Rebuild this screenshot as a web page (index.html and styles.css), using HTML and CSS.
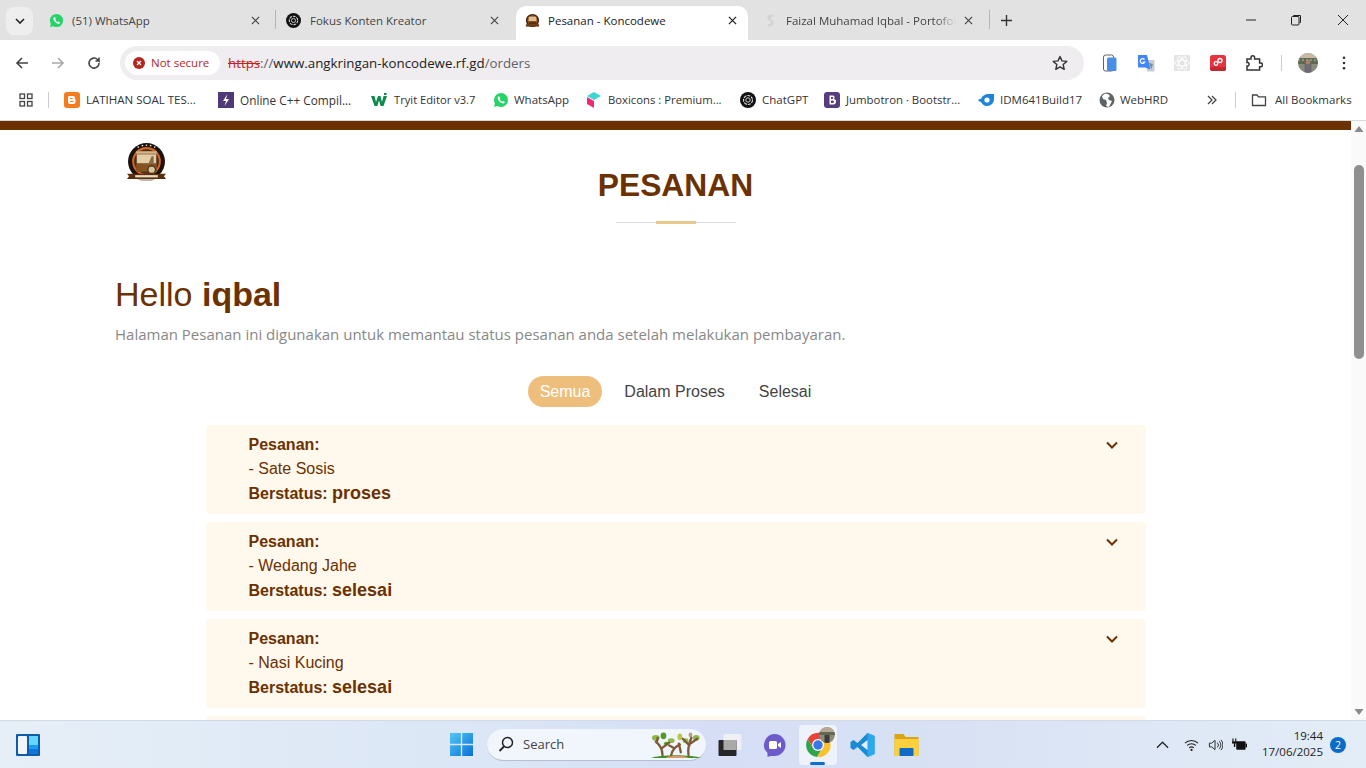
FILE: index.html
```html
<!DOCTYPE html>
<html lang="id">
<head>
<meta charset="utf-8">
<title>Pesanan - Koncodewe</title>
<link rel="stylesheet" href="styles.css">
</head>
<body>
<div class="tabstrip">
  <button class="tab-search"><svg width="10" height="6" viewBox="0 0 10 6"><path d="M1 1l4 4 4-4" fill="none" stroke="#222" stroke-width="1.600"/></svg></button>
  <div class="tab tab-1">
    <svg class="fav" viewBox="0 0 16 16"><circle cx="8" cy="8" r="7" fill="#25d366"/><path d="M1 15l1.200-4.200 3 3z" fill="#25d366"/><path d="M5.300 4.400c-.9.800-.9 2.200.2 3.800 1.100 1.700 2.700 3 4.400 3.200 1 .1 1.800-.5 2-1.400l-1.900-1-.8.800c-1-.4-2-1.400-2.500-2.500l.7-.8-.9-2z" fill="#fff"/></svg>
    <span class="tab-title">(51) WhatsApp</span>
    <svg class="tab-x" viewBox="0 0 10 10"><path d="M1 1l8 8M9 1l-8 8" stroke="#444" stroke-width="1.300"/></svg>
  </div>
  <i class="tab-sep"></i>
  <div class="tab tab-2">
    <svg class="fav" viewBox="0 0 16 16"><circle cx="8" cy="8" r="8" fill="#111"/><circle cx="8" cy="8" r="4.500" fill="none" stroke="#ddd" stroke-width="1.100" stroke-dasharray="3 1"/><circle cx="8" cy="8" r="2.200" fill="none" stroke="#ccc"/></svg>
    <span class="tab-title">Fokus Konten Kreator</span>
    <svg class="tab-x" viewBox="0 0 10 10"><path d="M1 1l8 8M9 1l-8 8" stroke="#444" stroke-width="1.300"/></svg>
  </div>
  <div class="tab tab-active">
    <svg class="fav" viewBox="0 0 16 16"><circle cx="8" cy="8" r="7" fill="#3a2010"/><circle cx="8" cy="8" r="5.500" fill="#a8551f"/><rect x="4" y="4" width="8" height="5" fill="#d9bd94"/><rect x="4" y="9" width="8" height="3" fill="#5a3110"/><rect x="1" y="12" width="14" height="2.500" fill="#6d3a12"/></svg>
    <span class="tab-title">Pesanan - Koncodewe</span>
    <svg class="tab-x" viewBox="0 0 10 10"><path d="M1 1l8 8M9 1l-8 8" stroke="#222" stroke-width="1.400"/></svg>
  </div>
  <div class="tab tab-4">
    <svg class="fav" viewBox="0 0 16 16"><path d="M11 3.500C9 2 5 3 5.500 5.500S11 8 10.500 10.500 7 14 5 12.500M9 2L7 6M9.500 10L7 14" fill="none" stroke="#d2d2d2" stroke-width="1.800"/></svg>
    <span class="tab-title tab-fade">Faizal Muhamad Iqbal - Portofolio</span>
    <svg class="tab-x" viewBox="0 0 10 10"><path d="M1 1l8 8M9 1l-8 8" stroke="#444" stroke-width="1.300"/></svg>
  </div>
  <i class="tab-sep"></i>
  <svg class="new-tab" viewBox="0 0 12 12"><path d="M6 0v12M0 6h12" stroke="#333" stroke-width="1.500"/></svg>
  <div class="win-controls">
    <svg viewBox="0 0 12 12"><path d="M1 6h10" stroke="#222"/></svg>
    <svg viewBox="0 0 12 12"><path d="M3.500 2.500V1.500h7v7h-1" fill="none" stroke="#222"/><rect x="1.500" y="2.500" width="7.500" height="8.500" rx="1" fill="none" stroke="#222"/></svg>
    <svg viewBox="0 0 12 12"><path d="M1 1l10 10M11 1L1 11" stroke="#222"/></svg>
  </div>
</div>

<div class="toolbar">
  <svg class="nav-btn" viewBox="0 0 16 16"><path d="M14 8H3M8 3L3 8l5 5" fill="none" stroke="#444" stroke-width="1.600"/></svg>
  <svg class="nav-btn" viewBox="0 0 16 16"><path d="M2 8h11M8 3l5 5-5 5" fill="none" stroke="#a8a8a8" stroke-width="1.600"/></svg>
  <svg class="nav-btn" viewBox="0 0 16 16"><path d="M13 8a5 5 0 1 1-1.500-3.500L13 6V2.500M13 6H9.500" fill="none" stroke="#444" stroke-width="1.600"/></svg>
  <div class="omnibox">
    <div class="chip">
      <svg class="chip-ic" viewBox="0 0 12 12"><circle cx="6" cy="6" r="6" fill="#b3261e"/><path d="M4 4l4 4M8 4l-4 4" stroke="#fff" stroke-width="1.200"/></svg>
      <span>Not secure</span>
    </div>
    <div class="url"><s class="proto">https</s><span class="url-dim">://</span><span class="url-host">www.angkringan-koncodewe.rf.gd</span><span class="url-dim">/orders</span></div>
    <svg class="star" viewBox="0 0 16 16"><path d="M8 1.500l2 4.400 4.800.5-3.600 3.200 1 4.700L8 11.900l-4.200 2.400 1-4.700L1.200 6.400 6 5.900z" fill="none" stroke="#333" stroke-width="1.400" stroke-linejoin="round"/></svg>
  </div>
  <div class="ext-row">
    <svg viewBox="0 0 18 18"><rect x="2.500" y="1" width="10" height="16" rx="2" fill="#fff" stroke="#5f6368"/><rect x="6" y="3.500" width="9.500" height="13.500" rx="1.500" fill="#4a8fe7"/></svg>
    <svg viewBox="0 0 18 18"><path d="M9 6h8.500v11.500H10z" fill="#c9ccd1"/><path d="M12 9l4 1-1.500 5z" fill="#6d8fa0"/><path d="M1 1h9l3.500 14.500L8 13.500H1z" fill="#4285f4"/><path d="M7.500 5.500a2.400 2.400 0 1 0 .3 2.600H5.800" fill="none" stroke="#fff" stroke-width="1.200"/></svg>
    <svg viewBox="0 0 18 18"><rect x="1" y="1" width="16" height="16" rx="1" fill="#e4e4e4"/><g fill="none" stroke="#fff" stroke-width="1"><ellipse cx="9" cy="9" rx="7" ry="3"/><ellipse cx="9" cy="9" rx="7" ry="3" transform="rotate(60 9 9)"/><ellipse cx="9" cy="9" rx="7" ry="3" transform="rotate(120 9 9)"/></g></svg>
    <svg viewBox="0 0 18 18"><rect x="1" y="1" width="16" height="16" rx="2.500" fill="#e8323e"/><path d="M1 13h16v1.500a2.500 2.500 0 0 1-2.500 2.500h-11A2.500 2.500 0 0 1 1 14.500z" fill="#c22834"/><circle cx="11" cy="6.500" r="2" fill="none" stroke="#fff" stroke-width="1.300"/><circle cx="7" cy="9.500" r="1.800" fill="none" stroke="#fff" stroke-width="1.300"/></svg>
    <svg viewBox="0 0 18 18"><path d="M2 5h4V3.500a1.800 1.800 0 0 1 3.600 0V5h5v4h1a1.900 1.900 0 0 1 0 3.800h-1V16H2v-4h1a1.900 1.900 0 0 0 0-3.500H2z" fill="none" stroke="#333" stroke-width="1.500"/></svg>
  </div>
  <i class="bar-sep"></i>
  <svg class="avatar" viewBox="0 0 20 20"><defs><clipPath id="ac"><circle cx="10" cy="10" r="10"/></clipPath></defs><g clip-path="url(#ac)"><rect width="20" height="20" fill="#8a8b7c"/><rect width="20" height="6" fill="#c9b8a6"/><rect y="5" width="20" height="6" fill="#5f6a50"/><path d="M0 7h20" stroke="#b8c2a8" stroke-dasharray="2 2"/><rect x="6.500" y="11" width="7" height="9" fill="#6f6a72"/><circle cx="10" cy="9" r="2.400" fill="#a9806a"/></g></svg>
  <svg class="menu-dots" viewBox="0 0 4 16"><circle cx="2" cy="2" r="1.500" fill="#333"/><circle cx="2" cy="8" r="1.500" fill="#333"/><circle cx="2" cy="14" r="1.500" fill="#333"/></svg>
</div>

<div class="bookmarks">
  <svg class="apps" viewBox="0 0 14 14"><g fill="none" stroke="#444" stroke-width="1.300"><rect x="1" y="1" width="4.500" height="4.500"/><rect x="8.500" y="1" width="4.500" height="4.500"/><rect x="1" y="8.500" width="4.500" height="4.500"/><rect x="8.500" y="8.500" width="4.500" height="4.500"/></g></svg>
  <i class="bm-sep"></i>
  <div class="bm"><svg viewBox="0 0 16 16"><rect width="16" height="16" rx="3" fill="#f57c1f"/><path d="M5 4h4a2 2 0 0 1 2 2v1l.5.500V10a2 2 0 0 1-2 2H6a2 2 0 0 1-2-2V5a1 1 0 0 1 1-1z" fill="#fff"/><path d="M6 6.500h2.500M6 9.500h3.500" stroke="#f57c1f" stroke-width="1.100"/></svg><span>LATIHAN SOAL TES...</span></div>
  <div class="bm"><svg viewBox="0 0 16 16"><rect width="16" height="16" fill="#4f3a78"/><path d="M9.500 2L5 9h3l-1.500 5L11 7H8z" fill="#fff"/></svg><span>Online C++ Compil...</span></div>
  <div class="bm"><svg viewBox="0 0 16 16"><path d="M0 4h3.500l1.500 6 2-6h2.500l1.500 6 1.500-6H16l-3.500 10H9.700L8 8.500 6.300 14H3.500z" fill="#0b8a4d"/><path d="M13 1h2.500v2H13z" fill="#0b8a4d"/></svg><span>Tryit Editor v3.7</span></div>
  <div class="bm"><svg viewBox="0 0 16 16"><circle cx="8" cy="8" r="7" fill="#25d366"/><path d="M1 15l1.200-4.200 3 3z" fill="#25d366"/><path d="M5.300 4.400c-.9.800-.9 2.200.2 3.800 1.100 1.700 2.700 3 4.400 3.200 1 .1 1.800-.5 2-1.400l-1.900-1-.8.800c-1-.4-2-1.400-2.500-2.500l.7-.8-.9-2z" fill="#fff"/></svg><span>WhatsApp</span></div>
  <div class="bm"><svg viewBox="0 0 16 16"><path d="M8 0l7 4-7 4-7-4z" fill="#3fd6d2"/><path d="M1 5l7 4v7l-7-4z" fill="#f0287a"/></svg><span>Boxicons : Premium...</span></div>
  <div class="bm"><svg viewBox="0 0 16 16"><circle cx="8" cy="8" r="8" fill="#111"/><circle cx="8" cy="8" r="4.500" fill="none" stroke="#ddd" stroke-width="1.100" stroke-dasharray="3 1"/><circle cx="8" cy="8" r="2.200" fill="none" stroke="#ccc"/></svg><span>ChatGPT</span></div>
  <div class="bm"><svg viewBox="0 0 16 16"><rect width="16" height="16" rx="3" fill="#563d7c"/><path d="M5.500 3.500h3a2 2 0 0 1 1.300 3.600A2.400 2.400 0 0 1 8.800 12.500H5.500zM7 5v2h1.300a1 1 0 0 0 0-2zM7 8.400V11h1.600a1.300 1.300 0 0 0 0-2.600z" fill="#fff" fill-rule="evenodd"/></svg><span>Jumbotron · Bootstr...</span></div>
  <div class="bm"><svg viewBox="0 0 16 16"><path d="M0 8c1-1 2-1 3-1 1-3 4-5 8-5h5v5c0 4-3 7-7 7-3 0-5-2-6-4-1 0-2-1-3-2z" fill="#1d84dc"/><circle cx="9" cy="8" r="2.600" fill="#fff"/></svg><span>IDM641Build17</span></div>
  <div class="bm"><svg viewBox="0 0 16 16"><circle cx="8" cy="8" r="7.500" fill="#5f6368"/><path d="M6 1.500L3 4l1 3 3 1 1 3-1 3 3 1 2-4 1-2-3-1-1-2 2-2-2-2z" fill="#fff"/></svg><span>WebHRD</span></div>
  <svg class="bm-more" viewBox="0 0 10 10"><path d="M1 1l4 4-4 4M5 1l4 4-4 4" fill="none" stroke="#444" stroke-width="1.300"/></svg>
  <i class="bm-sep"></i>
  <div class="bm bm-all"><svg viewBox="0 0 16 16"><path d="M1.500 3h4.500l1.500 1.800h7V13.500h-13z" fill="none" stroke="#444" stroke-width="1.300"/></svg><span>All Bookmarks</span></div>
</div>

<div class="viewport">
  <main class="page">
    <div class="topbar"></div>
    <div class="container">
      <svg class="logo" viewBox="0 0 38 38"><circle cx="19" cy="18" r="18" fill="#1c120c"/><g fill="#eee"><circle cx="11" cy="4" r=".8"/><circle cx="15" cy="2.600" r=".8"/><circle cx="19" cy="2.200" r=".8"/><circle cx="23" cy="2.600" r=".8"/><circle cx="27" cy="4" r=".8"/></g><circle cx="19" cy="18" r="14" fill="#d0661f"/><circle cx="19" cy="18" r="12" fill="#4a2d16"/><rect x="9" y="8" width="20" height="2.500" fill="#d3b589"/><rect x="9.500" y="11" width="19" height="9" fill="#e3cda6"/><path d="M24 13h2v7h-5z" fill="#8a6a44"/><rect x="9" y="20" width="20" height="8" fill="#855322"/><circle cx="24" cy="26" r="3.600" fill="#d9c39b" stroke="#33200f"/><path d="M0 30h38l-2 2.500 2 2.500H0l2-2.500z" fill="#5b2e0c"/><rect x="8" y="31.300" width="22" height="2.200" fill="#e7dac4"/><path d="M10 35h18l-4 2h-10z" fill="#bdb6ac"/></svg>
      <div class="section-title">
        <h2>PESANAN</h2>
        <div class="title-rule"><i></i></div>
      </div>
      <h1 class="hello">Hello <b>iqbal</b></h1>
      <p class="lead">Halaman Pesanan ini digunakan untuk memantau status pesanan anda setelah melakukan pembayaran.</p>
      <div class="filters">
        <span class="pill pill-on">Semua</span>
        <span class="pill">Dalam Proses</span>
        <span class="pill">Selesai</span>
      </div>
      <div class="orders">
        <article class="order">
          <div class="order-text"><b>Pesanan:</b><span>- Sate Sosis</span><b>Berstatus: <em>proses</em></b></div>
          <svg class="chev" viewBox="0 0 12 8"><path d="M1 1.500l5 5 5-5" fill="none" stroke="#6b3100" stroke-width="2"/></svg>
        </article>
        <article class="order">
          <div class="order-text"><b>Pesanan:</b><span>- Wedang Jahe</span><b>Berstatus: <em>selesai</em></b></div>
          <svg class="chev" viewBox="0 0 12 8"><path d="M1 1.500l5 5 5-5" fill="none" stroke="#6b3100" stroke-width="2"/></svg>
        </article>
        <article class="order">
          <div class="order-text"><b>Pesanan:</b><span>- Nasi Kucing</span><b>Berstatus: <em>selesai</em></b></div>
          <svg class="chev" viewBox="0 0 12 8"><path d="M1 1.500l5 5 5-5" fill="none" stroke="#6b3100" stroke-width="2"/></svg>
        </article>
        <article class="order"></article>
      </div>
    </div>
  </main>
  <div class="scrollbar">
    <svg class="sb-arrow" viewBox="0 0 10 8"><path d="M5 1l4.500 6H.5z" fill="#8a8a8a"/></svg>
    <div class="sb-track"><div class="sb-thumb"></div></div>
    <svg class="sb-arrow" viewBox="0 0 10 8"><path d="M5 7L.5 1h9z" fill="#8a8a8a"/></svg>
  </div>
</div>

<footer class="taskbar">
  <div class="tb-left">
    <svg class="widget" viewBox="0 0 24 22"><rect width="24" height="22" rx="1" fill="#0f5da8"/><rect x="2" y="2" width="9" height="18" rx="1" fill="#f2f5f8"/><rect x="13" y="2" width="9" height="9" fill="#63d7fd"/><rect x="13" y="11" width="9" height="4" fill="#1b9bf0"/><rect x="13" y="15" width="9" height="5" fill="#0a78dc"/></svg>
  </div>
  <div class="tb-center">
    <svg class="start" viewBox="0 0 24 24"><defs><linearGradient id="sg" x1="0" y1="0" x2="1" y2="1"><stop offset="0" stop-color="#52c8f5"/><stop offset="1" stop-color="#0a6fd6"/></linearGradient></defs><path d="M0 0h11.300v11.300H0zM12.700 0H24v11.300H12.700zM0 12.700h11.300V24H0zM12.700 12.700H24V24H12.700z" fill="url(#sg)"/></svg>
    <div class="search">
      <svg class="search-ic" viewBox="0 0 16 16"><circle cx="9.500" cy="6.500" r="5" fill="none" stroke="#222" stroke-width="1.500"/><path d="M6 10.500L1.500 15" stroke="#222" stroke-width="1.800"/></svg>
      <span>Search</span>
      <svg class="search-art" viewBox="0 0 54 28"><path d="M1 27c8-4 44-4 52 0z" fill="#3f8f2a"/><path d="M16 27c4-3 20-3 24 0z" fill="#d9996e"/><g fill="#8fb84a"><ellipse cx="6" cy="6" rx="4" ry="3"/><ellipse cx="14" cy="4" rx="3" ry="3.500" fill="#4f9a2c"/><ellipse cx="22" cy="9" rx="3.500" ry="2.500"/><ellipse cx="31" cy="5" rx="2.500" ry="3.500" fill="#b5c94a"/><ellipse cx="37" cy="9" rx="3" ry="2.500"/><ellipse cx="48" cy="6" rx="3.500" ry="3"/><ellipse cx="17" cy="12" rx="2.500" ry="2" fill="#4f9a2c"/><ellipse cx="42" cy="3" rx="2" ry="2.500" fill="#b8a078"/></g><g fill="none" stroke="#7d5a33" stroke-width="2.400" stroke-linecap="round"><path d="M13 24c0-5-2-10-7-14M12 17l8-6M7 11l1-5"/><path d="M40 24c-1-6 0-11 3-18M41 14l-7-7M42 12l7-5"/><path d="M22 24c1-6 6-10 9-11M24 16l-4-2M30 12l2 9"/></g></svg>
    </div>
    <div class="apps-row">
      <div class="app"><svg viewBox="0 0 24 24"><rect x="5" y="1" width="18" height="16" rx="1" fill="#eef0f3"/><rect x="0" y="7" width="18" height="16" rx="1" fill="#262626"/><rect x="5" y="7" width="13" height="10" fill="#a9a9a9"/></svg></div>
      <div class="app"><svg viewBox="0 0 24 24"><path d="M12 1a11 11 0 0 1 0 22H8l-3 1v-4A11 11 0 0 1 12 1z" fill="#6c5bc9"/><rect x="6.500" y="8" width="8" height="8" rx="1.500" fill="#fff"/><path d="M15.500 11l3-2v6l-3-2z" fill="#fff"/></svg></div>
      <div class="app app-on"><svg viewBox="0 0 24 24"><path d="M12 12L22 6.500A11 11 0 0 0 2.500 6.500L7 14z" fill="#e6443a"/><path d="M7 14L2.500 6.500A11 11 0 0 0 11 23l5-8z" fill="#2fa44f"/><path d="M16 15l-5 8A11 11 0 0 0 22 6.500H12z" fill="#fbc02d"/><circle cx="12" cy="12" r="5.500" fill="#fff"/><circle cx="12" cy="12" r="4.400" fill="#3b78e7"/></svg><svg class="app-badge" viewBox="0 0 16 16"><circle cx="8" cy="8" r="8" fill="#8a8b7c"/><rect width="16" height="5" fill="#b8a896"/><rect y="5" width="16" height="3" fill="#5f6a50"/><rect x="5.500" y="8" width="5" height="8" fill="#3d3a38"/></svg><i class="app-ind"></i></div>
      <div class="app"><svg viewBox="0 0 24 24"><path d="M17 0L7 10 3 7 0 9v6l3 2 4-3 10 10 7-3V3z" fill="#1a8ad4"/><path d="M17 0l7 3v18l-7 3z" fill="#2ba8ee"/><path d="M17 7v10l-6.500-5z" fill="#e6eff8"/></svg></div>
      <div class="app"><svg viewBox="0 0 24 24"><path d="M0 1h9l2 3h13v19H0z" fill="#d9a514"/><path d="M0 6h24v17H0z" fill="#fbd03f"/><rect x="5" y="15" width="14" height="8" rx="1" fill="#0f6cc4"/></svg></div>
    </div>
  </div>
  <div class="tb-right">
    <svg class="tray tray-up" viewBox="0 0 14 8"><path d="M1 7l6-6 6 6" fill="none" stroke="#222" stroke-width="1.300"/></svg>
    <svg class="tray" viewBox="0 0 16 14"><path d="M1 5a10 10 0 0 1 14 0M3.300 7.500a7 7 0 0 1 9.400 0M5.500 10a4 4 0 0 1 5 0" fill="none" stroke="#222" stroke-width="1.100"/><circle cx="8" cy="12.300" r="1.200" fill="#222"/></svg>
    <svg class="tray" viewBox="0 0 16 14"><path d="M1.500 5h2.500L7.500 2v10L4 9H1.500z" fill="none" stroke="#222"/><path d="M10 4.500a3.500 3.500 0 0 1 0 5M12 3a6 6 0 0 1 0 8M13.800 1.500a8 8 0 0 1 0 11" fill="none" stroke="#222"/></svg>
    <svg class="tray" viewBox="0 0 16 14"><path d="M1 0v3M4 0v3" stroke="#111" stroke-width="1.200"/><path d="M0 3h5.500v2.500H3.500V9H2V5.500H0z" fill="#111"/><rect x="4.500" y="3" width="10" height="9" rx="1" fill="#111"/><rect x="14.500" y="5.500" width="1.500" height="4" fill="#111"/></svg>
    <div class="clock"><span>19:44</span><span>17/06/2025</span></div>
    <div class="notif">2</div>
  </div>
</footer>
</body>
</html>
```

FILE: styles.css
```css
* { box-sizing: border-box; }
html, body { margin: 0; padding: 0; }
body {
  width: 1366px;
  height: 768px;
  overflow: hidden;
  display: flex;
  flex-direction: column;
  background: #fff;
  font-family: "Open Sans", "Noto Sans", sans-serif;
}
svg { display: block; flex: none; }

/* tab strip */
.tabstrip {
  height: 40px;
  flex: none;
  display: flex;
  align-items: flex-end;
  background: #e2e2e2;
  padding-left: 5px;
}
.tab-search {
  width: 27px;
  height: 28px;
  margin: 0 8px 5px 1px;
  padding: 0;
  border: 0;
  border-radius: 8px;
  background: #eeeeee;
  display: flex;
  align-items: center;
  justify-content: center;
}
.tab {
  height: 34px;
  display: flex;
  align-items: center;
  padding-bottom: 6px;
  font-size: 11.500px;
  color: #444;
}
.tab-1 { width: 235px; margin-left: -1px; padding-left: 9px; padding-right: 15px; }
.tab-2 { width: 232px; margin-right: 8px; padding-left: 10px; padding-right: 9px; }
.tab-2 .fav { margin-right: 9px; }
.tab-active {
  width: 232px;
  background: #fff;
  border-radius: 10px 10px 0 0;
  color: #222;
  padding-left: 9px;
  padding-right: 11px;
  margin-right: 6px;
}
.tab-4 { width: 229px; padding-left: 9px; padding-right: 10px; margin-right: 6px; }
.fav { width: 15px; height: 15px; margin-right: 8px; }
.tab-title { flex: 1; white-space: nowrap; overflow: hidden; min-width: 0; }
.tab-fade { -webkit-mask-image: linear-gradient(90deg, #000 88%, transparent); mask-image: linear-gradient(90deg, #000 88%, transparent); }
.tab-x { width: 9px; height: 9px; margin-left: 8px; }
.tab-sep { width: 1px; height: 19px; background: #b5b5b5; margin-bottom: 11px; flex: none; }
.new-tab { width: 11px; height: 11px; margin: 0 0 14px 11px; }
.win-controls {
  display: flex;
  margin-left: auto;
  margin-bottom: 14px;
  gap: 33px;
  padding-right: 17px;
}
.win-controls svg { width: 12px; height: 12px; }
.win-controls svg:nth-child(2) { margin-right: 2px; }

/* toolbar */
.toolbar {
  height: 45px;
  flex: none;
  display: flex;
  align-items: center;
  background: #fff;
  padding-left: 14px;
}
.nav-btn { width: 16px; height: 16px; margin-right: 20px; }
.omnibox {
  width: 964px;
  height: 34px;
  margin-left: -2px;
  border-radius: 17px;
  background: #efedef;
  display: flex;
  align-items: center;
  padding-left: 5px;
  padding-right: 16px;
}
.chip {
  width: 95px;
  height: 24px;
  border-radius: 12px;
  background: #fff;
  display: flex;
  align-items: center;
  padding-left: 8px;
  gap: 6px;
  color: #b3261e;
  font-size: 11.500px;
  white-space: nowrap;
}
.chip-ic { width: 12px; height: 12px; }
.url { margin-left: 8px; font-size: 13.300px; color: #222; flex: 1; white-space: nowrap; }
.proto { color: #c5221f; }
.url-dim { color: #5f6368; }
.star { width: 16px; height: 16px; }
.ext-row {
  display: flex;
  align-items: center;
  gap: 18px;
  margin-left: 17px;
}
.ext-row svg { width: 18px; height: 18px; }
.bar-sep { width: 1px; height: 16px; background: #ccc; margin-left: 18px; flex: none; }
.avatar { width: 20px; height: 20px; margin-left: 16px; }
.menu-dots { width: 4px; height: 14px; margin-left: 24px; }

/* bookmarks */
.bookmarks {
  height: 36px;
  flex: none;
  background: #fff;
  display: flex;
  align-items: center;
  padding-left: 19px;
  border-bottom: 1px solid #d9d9d9;
  padding-bottom: 6px;
}
.apps { width: 14px; height: 14px; margin-right: 15px; }
.bm-sep { width: 1px; height: 16px; background: #ccc; flex: none; margin-right: 15px; }
.bm {
  display: flex;
  align-items: center;
  gap: 6px;
  font-size: 11.500px;
  color: #333;
  white-space: nowrap;
  flex: none;
}
.bm svg { width: 16px; height: 16px; }
.bm:nth-of-type(1) { width: 154px; }
.bm:nth-of-type(2) { width: 153px; font-size: 11.800px; }
.bm:nth-of-type(3) { width: 122px; gap: 7px; font-size: 11.200px; }
.bm:nth-of-type(4) { width: 93px; gap: 5px; }
.bm:nth-of-type(5) { width: 154px; font-size: 11.300px; }
.bm:nth-of-type(6) { width: 84px; }
.bm:nth-of-type(7) { width: 154px; font-size: 11.400px; }
.bm:nth-of-type(8) { width: 121px; }
.bm:nth-of-type(9) { width: 108px; gap: 5px; }
.bm-more { width: 10px; height: 10px; margin-right: 18px; }
.bm-all { gap: 8px; }

/* page */
.viewport { flex: 1; min-height: 0; display: flex; }
.page { flex: 1; min-width: 0; overflow: hidden; background: #fff; }
.topbar { height: 9px; background: #6b3100; }
.container { padding: 0 115px; position: relative; }
.logo {
  position: absolute;
  left: 127px;
  top: 13px;
  width: 39px;
  height: 39px;
  filter: blur(.6px);
}
.section-title { padding-top: 35px; text-align: center; }
.section-title h2 {
  margin: 0;
  font: 700 31.800px/40px "Liberation Sans", Arial, sans-serif;
  color: #6b3100;
}
.title-rule {
  width: 120px;
  height: 1px;
  margin: 17px auto 0;
  background: #ddd;
  display: flex;
  justify-content: center;
  align-items: center;
}
.title-rule i { width: 40px; height: 3px; background: #e8c88f; }
.hello {
  margin: 49px 0 0;
  font: 400 34px/44px "Liberation Sans", Arial, sans-serif;
  color: #6b3100;
}
.lead { margin: 6px 0 0; font-size: 15px; line-height: 24px; color: #888; }
.filters {
  display: flex;
  justify-content: center;
  gap: 10px;
  margin-top: 30px;
}
.pill {
  height: 31px;
  padding: 0 12px;
  border-radius: 16px;
  font: 400 16px/31px "Liberation Sans", Arial, sans-serif;
  color: #444;
}
.pill-on { background: #eebf7c; color: #fff; }
.orders {
  width: 940px;
  margin: 18px auto 0;
  display: flex;
  flex-direction: column;
  gap: 8px;
}
.order {
  height: 89px;
  border-radius: 4px;
  background: #fff8ec;
  display: flex;
  justify-content: space-between;
  padding: 8px 28px 0 43px;
}
.order-text {
  display: flex;
  flex-direction: column;
  font: 400 16px/24px "Liberation Sans", Arial, sans-serif;
  color: #6b3100;
}
.order-text em { font-style: normal; font-size: 18px; }
.chev { width: 12px; height: 8px; margin-top: 8px; }

/* scrollbar */
.scrollbar {
  width: 15px;
  flex: none;
  background: #fafafa;
  display: flex;
  flex-direction: column;
  align-items: center;
  padding: 4px 0;
}
.sb-arrow { width: 10px; height: 8px; }
.sb-track { flex: 1; width: 100%; padding: 32px 2px 0 3px; }
.sb-thumb { height: 194px; background: #8f8f8f; border-radius: 5px; }

/* taskbar */
.taskbar {
  height: 48px;
  flex: none;
  display: flex;
  align-items: center;
  border-top: 1px solid #d0dae8;
  background: linear-gradient(90deg, #e6eff7 0%, #dbe6f6 35%, #d5def5 52%, #d8e2f4 70%, #e3edf7 100%);
}
.tb-left { width: 450px; padding-left: 16px; flex: none; }
.widget { width: 24px; height: 22px; }
.tb-center { display: flex; align-items: center; flex: none; }
.start { width: 23px; height: 23px; }
.search {
  width: 219px;
  height: 32px;
  margin-left: 14px;
  border-radius: 16px;
  background: #f1f5fc;
  border-bottom: 1px solid #b6bfce;
  display: flex;
  align-items: center;
  padding-left: 11px;
  font-size: 13px;
  color: #444;
  position: relative;
}
.search-ic { width: 16px; height: 16px; margin-right: 9px; }
.search-art {
  position: absolute;
  right: 4px;
  bottom: 1px;
  width: 52px;
  height: 27px;
}
.apps-row { display: flex; align-items: center; margin-left: 2px; }
.app {
  width: 44px;
  height: 40px;
  display: flex;
  align-items: center;
  justify-content: center;
  position: relative;
  border-radius: 4px;
}
.app svg { width: 25px; height: 24px; }
.app-on { background: #eef3fb; width: 38px; margin: 0 3px; }
.app-on > svg:first-child { width: 26px; height: 26px; }
.app svg.app-badge { position: absolute; right: 2px; top: 2px; width: 16px; height: 16px; border-radius: 50%; }
.app-ind { position: absolute; left: 11px; bottom: 0; width: 15px; height: 3px; border-radius: 2px; background: #0a6fd6; }
.tb-right {
  margin-left: auto;
  display: flex;
  align-items: center;
  padding-right: 20px;
}
.tray { width: 15px; height: 14px; margin-right: 9px; }
.tray-up { width: 13px; height: 8px; margin-right: 15px; }
.clock {
  display: flex;
  flex-direction: column;
  align-items: flex-end;
  font-size: 11.500px;
  line-height: 16px;
  color: #222;
  margin-left: 6px;
  margin-top: -2px;
  white-space: nowrap;
}
.notif {
  width: 16px;
  height: 16px;
  border-radius: 50%;
  background: #0a6cc8;
  color: #fff;
  font-size: 10.500px;
  line-height: 16px;
  text-align: center;
  margin-left: 7px;
}
```
